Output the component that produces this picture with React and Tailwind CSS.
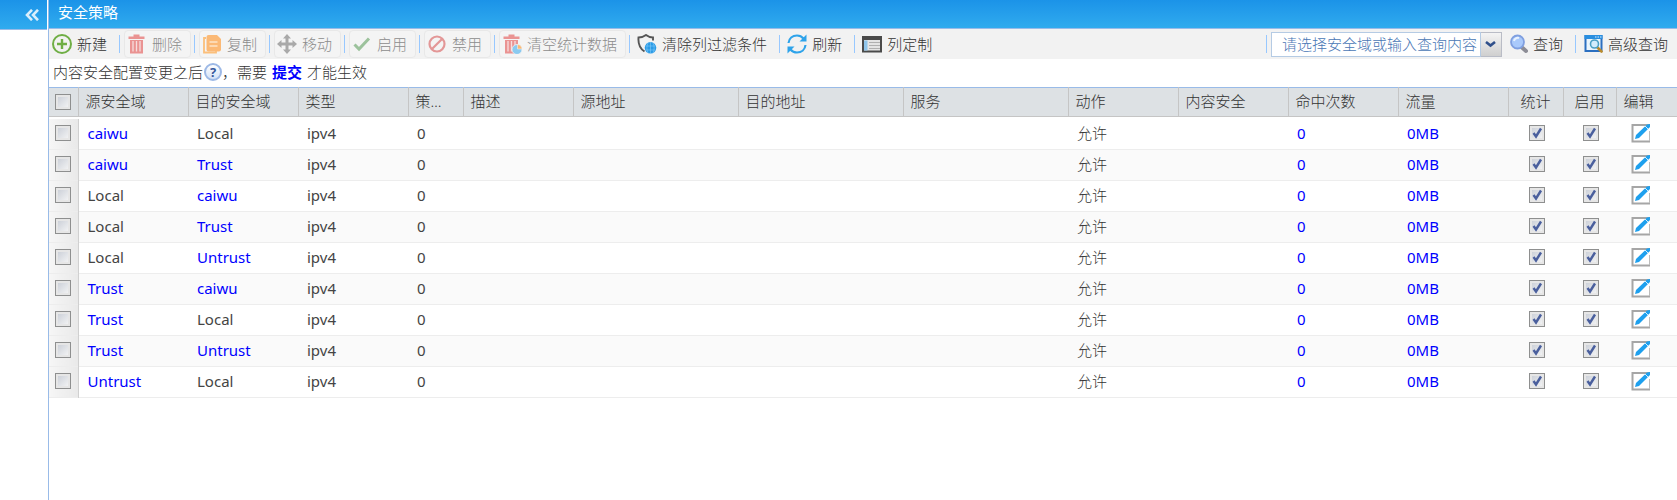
import React, { useState } from "react";

const COLUMNS = [
  { key: "src", label: "源安全域", width: "w-[110px]" },
  { key: "dst", label: "目的安全域", width: "w-[110px]" },
  { key: "type", label: "类型", width: "w-[110px]" },
  { key: "count", label: "策略数", width: "w-[55px]" },
  { key: "desc", label: "描述", width: "w-[110px]" },
  { key: "srcAddr", label: "源地址", width: "w-[165px]" },
  { key: "dstAddr", label: "目的地址", width: "w-[165px]" },
  { key: "service", label: "服务", width: "w-[165px]" },
  { key: "action", label: "动作", width: "w-[110px]" },
  { key: "content", label: "内容安全", width: "w-[110px]" },
  { key: "hits", label: "命中次数", width: "w-[110px]" },
  { key: "traffic", label: "流量", width: "w-[110px]" },
  { key: "stat", label: "统计", width: "w-[55px]", center: true },
  { key: "enabled", label: "启用", width: "w-[53px]", center: true },
  { key: "edit", label: "编辑", width: "" },
];

const POLICIES = [
  ["caiwu", "Local"],
  ["caiwu", "Trust"],
  ["Local", "caiwu"],
  ["Local", "Trust"],
  ["Local", "Untrust"],
  ["Trust", "caiwu"],
  ["Trust", "Local"],
  ["Trust", "Untrust"],
  ["Untrust", "Local"],
];

const PlusIcon = () => (
  <svg width="20" height="20" viewBox="0 0 20 20" fill="none" stroke="#6fae45">
    <circle cx="10" cy="10" r="9" strokeWidth="2" />
    <path d="M10 5v10M5 10h10" strokeWidth="2.4" />
  </svg>
);

const TrashShape = () => (
  <g fill="#ea9392">
    <path d="M1.500 2.500h16v2.500h-16zM6.500 .5h6v2h-6z" />
    <path d="M3 6h13v13.500H3z" />
    <path d="M6 7v10.500M9.500 7v10.500M13 7v10.500" stroke="#f6dddd" strokeWidth="1.300" />
  </g>
);

const TrashIcon = () => (
  <svg width="20" height="20" viewBox="0 0 20 20">
    <TrashShape />
  </svg>
);

const CopyIcon = () => (
  <svg width="20" height="20" viewBox="0 0 20 20">
    <path d="M4 4H2v14.500h12V17" fill="none" stroke="#fbbf7b" strokeWidth="1.800" />
    <path d="M6.500 1H15l4 4v10.500q0 2-2 2H6.500q-2 0-2-2V3q0-2 2-2z" fill="#fbb976" />
    <path d="M7.500 8h8M7.500 12h8" stroke="#fde3c8" strokeWidth="1.500" />
  </svg>
);

const MoveIcon = () => (
  <svg width="20" height="20" viewBox="0 0 20 20" fill="#a9a9a9">
    <path d="M10 0l4 4.500h-2.500v4h4V6L20 10l-4.500 4v-2.500h-4v4H14L10 20l-4-4.500h2.500v-4h-4V14L0 10l4.500-4v2.500h4v-4H6z" />
  </svg>
);

const CheckIcon = () => (
  <svg width="20" height="20" viewBox="0 0 20 20" fill="none" stroke="#9cc29c" strokeWidth="3">
    <path d="M2.500 10.500l4.500 4.500L17 4.500" />
  </svg>
);

const BanIcon = () => (
  <svg width="20" height="20" viewBox="0 0 20 20" fill="none" stroke="#e39797" strokeWidth="2.200">
    <circle cx="10" cy="10" r="7.500" />
    <path d="M4.700 15.300L15.300 4.700" />
  </svg>
);

const ClearStatsIcon = () => (
  <svg width="20" height="20" viewBox="0 0 20 20">
    <TrashShape />
    <circle cx="15" cy="15.500" r="5" fill="#8bcaf0" stroke="#f2f2f2" strokeWidth="0.800" />
    <path d="M15.500 15V10.500a4.500 4.500 0 0 1 4.500 4.500z" fill="#fbb976" stroke="#f2f2f2" strokeWidth="0.600" />
  </svg>
);

const ShieldIcon = () => (
  <svg width="20" height="20" viewBox="0 0 20 20" fill="none">
    <path d="M16 6.500V3.500C13 3.500 11 2.500 9 1 7 2.500 4.500 3.500 1.500 3.500 1 9.500 3 14.500 7.500 17.500" stroke="#555" strokeWidth="1.900" />
    <circle cx="13.500" cy="13.800" r="5.800" fill="#2b9be6" />
    <path d="M8.500 12h10M8.500 16h10M13.500 8v12M11 9c-1.500 3-1.500 7 0 10M16 9c1.500 3 1.500 7 0 10" stroke="#8fd0fa" strokeWidth="0.500" />
  </svg>
);

const RefreshIcon = () => (
  <svg width="20" height="20" viewBox="0 0 20 20" fill="none" stroke="#2ea3ea" strokeWidth="2.200">
    <path d="M1.500 9C2 4.500 5.500 1.500 10 1.500c2.700 0 5 1.200 6.500 3" />
    <path d="M18.500 11c-.5 4.500-4 7.500-8.500 7.500-2.700 0-5-1.200-6.500-3" />
    <path d="M19.500.5v7h-7z" fill="#2ea3ea" stroke="none" />
    <path d="M.5 19.500v-7h7z" fill="#2ea3ea" stroke="none" />
  </svg>
);

const ColumnsIcon = () => (
  <svg width="20" height="20" viewBox="0 0 20 20">
    <path d="M1 3h18v14.500H1z" fill="#e4e4e4" stroke="#4a4a4a" strokeWidth="2" />
    <path d="M0 2h20v4H0z" fill="#4a4a4a" />
    <path d="M2 6.500h3.500v10H2z" fill="#8ec4ea" />
    <path d="M7 8.500h11M7 11.500h11M7 14.500h11" stroke="#b0b0b0" />
  </svg>
);

const SearchIcon = () => (
  <svg width="20" height="20" viewBox="0 0 20 20">
    <path d="M14 13.500l4 3.500" stroke="#8d8d96" strokeWidth="4" strokeLinecap="round" />
    <circle cx="9.500" cy="8" r="6.500" fill="#a9c9fb" stroke="#7f9fe0" strokeWidth="1.800" />
    <path d="M6 7a4 4 0 0 1 5-3" fill="none" stroke="#e8f2ff" strokeWidth="2" />
  </svg>
);

const AdvancedSearchIcon = () => (
  <svg width="20" height="20" viewBox="0 0 20 20">
    <path d="M2.500 2h16v15h-16z" fill="#eaf5fd" stroke="#2b6fc0" strokeWidth="2" />
    <path d="M1.500 1h18v4h-18z" fill="#2a8fe0" />
    <path d="M12 3h1.500M14.500 3H16M17 3h1.500" stroke="#d7efff" />
    <path d="M14.500 13.500l4 4" stroke="#b98a2c" strokeWidth="2.600" strokeLinecap="round" />
    <circle cx="11.500" cy="10" r="4" fill="#d3edfb" stroke="#4ba0c4" strokeWidth="1.600" />
  </svg>
);

const HelpIcon = () => (
  <span className="ml-px inline-flex size-[18px] items-center justify-center rounded-full border-2 border-[#9db9e6] bg-linear-to-b from-white to-[#d3e1f6] text-[13px] leading-none font-bold text-[#35589c]">?</span>
);

const EditIcon = () => (
  <svg width="20" height="20" viewBox="0 0 20 20">
    <path d="M1.500 2h16.500v16.500H1.500z" fill="#fff" />
    <path d="M19 2H1.500v16.500H19" fill="none" stroke="#a6a6a6" strokeWidth="2" />
    <path d="M18.500 8v10" stroke="#bdbdbd" />
    <path d="M4 16l1-4L16 1.500 19 1v3L8 15z" fill="#1ea0ee" />
    <path d="M14 3l3 3" stroke="#d4edfc" />
  </svg>
);

const ToolButton = ({ icon: Icon, children, disabled }) => (
  <button
    type="button"
    disabled={disabled}
    className="flex h-7 shrink-0 items-center gap-[5px] rounded border border-transparent pr-2 pl-0.5 whitespace-nowrap disabled:border-[#e8e8e8] disabled:bg-[#f4f4f4] disabled:text-[#8c8c8c]"
  >
    <Icon />
    {children}
  </button>
);

const Separator = () => <span className="mr-1 ml-[3px] h-[18px] w-px shrink-0 bg-[#98c8ff]" />;

const Box = ({ label, checked, onChange }) => (
  <input
    type="checkbox"
    aria-label={label}
    checked={checked}
    onChange={onChange}
    className="block size-4 appearance-none border border-[#8e8f8f] bg-linear-to-br from-[#c6cbd4] to-[#f8f8f8] shadow-[inset_0_0_0_2px_#e6e6e6] outline-none"
  />
);

const TickBox = ({ label }) => {
  const [on, setOn] = useState(true);
  return (
    <div className="relative mx-auto size-4">
      <Box label={label} checked={on} onChange={() => setOn(!on)} />
      {on && (
        <svg className="pointer-events-none absolute inset-0" width="16" height="16" viewBox="0 0 16 16" fill="none" stroke="#4a5f9d" strokeWidth="2.400">
          <path d="M4.500 8l2.500 3.500L12 3.500" />
        </svg>
      )}
    </div>
  );
};

const Zone = ({ name }) =>
  name === "Local" ? (
    name
  ) : (
    <a href="#zone" className="text-[#0000ff]">
      {name}
    </a>
  );

const App = () => {
  const [selected, setSelected] = useState([]);

  const toggleRow = (i) => setSelected(selected.includes(i) ? selected.filter((n) => n !== i) : [...selected, i]);
  const toggleAll = () => setSelected(selected.length === POLICIES.length ? [] : POLICIES.map((_, i) => i));

  return (
    <div className="flex min-h-screen bg-white font-['Noto_Sans','Noto_Sans_CJK_SC',sans-serif] text-[15px] leading-5 font-light text-[#333]">
      {/* collapsed side menu */}
      <aside className="w-[47px] shrink-0">
        <div className="flex h-[30px] items-center justify-end border-b border-[#99bbe8] bg-linear-to-b from-[#1b93e8] to-[#30abee] pr-2">
          <button type="button" aria-label="展开菜单" className="text-[#d9eefc]">
            <svg width="14" height="12" viewBox="0 0 14 12" fill="none" stroke="currentColor" strokeWidth="2.600">
              <path d="M7 .8L2 6l5 5.200M13 .8L8 6l5 5.200" />
            </svg>
          </button>
        </div>
      </aside>

      <main className="ml-px min-w-0 flex-1 border-l border-[#99bbe8]">
        <h1 className="flex h-[29px] items-center border-b border-[#99bbe8] bg-linear-to-b from-[#1b93e8] to-[#30abee] pb-1 pl-[9px] font-normal text-white">安全策略</h1>

        {/* toolbar */}
        <div className="flex h-[30px] items-center bg-[#f2f2f2]">
          <ToolButton icon={PlusIcon}>新建</ToolButton>
          <Separator />
          <ToolButton icon={TrashIcon} disabled>删除</ToolButton>
          <Separator />
          <ToolButton icon={CopyIcon} disabled>复制</ToolButton>
          <Separator />
          <ToolButton icon={MoveIcon} disabled>移动</ToolButton>
          <Separator />
          <ToolButton icon={CheckIcon} disabled>启用</ToolButton>
          <Separator />
          <ToolButton icon={BanIcon} disabled>禁用</ToolButton>
          <Separator />
          <ToolButton icon={ClearStatsIcon} disabled>清空统计数据</ToolButton>
          <Separator />
          <ToolButton icon={ShieldIcon}>清除列过滤条件</ToolButton>
          <Separator />
          <ToolButton icon={RefreshIcon}>刷新</ToolButton>
          <Separator />
          <ToolButton icon={ColumnsIcon}>列定制</ToolButton>

          <div className="ml-auto flex items-center">
            <Separator />
            <div className="mr-[3px] flex items-center">
              <input
                type="text"
                aria-label="查询条件"
                placeholder="请选择安全域或输入查询内容"
                className="h-[25px] w-[210px] border border-[#b5cbe4] bg-white pl-2.5 outline-none placeholder:text-[#4a77b5]"
              />
              <button type="button" aria-label="选择安全域" className="flex h-[25px] w-[21px] items-center justify-center border border-l-0 border-[#b9bcc6] bg-linear-to-b from-[#f4f4f4] to-[#cfcfcf]">
                <svg width="11" height="7" viewBox="0 0 11 7" fill="none" stroke="#2f4f8a" strokeWidth="2.600">
                  <path d="M1 1l4.500 3.500L10 1" />
                </svg>
              </button>
            </div>
            <ToolButton icon={SearchIcon}>查询</ToolButton>
            <Separator />
            <ToolButton icon={AdvancedSearchIcon}>高级查询</ToolButton>
          </div>
        </div>

        <p className="flex h-7 items-center pb-0.5 pl-1">
          内容安全配置变更之后
          <HelpIcon />
          ，需要
          <a href="#commit" className="mx-[5px] font-bold text-[#0000ff]">
            提交
          </a>
          才能生效
        </p>

        <table className="w-full table-fixed border-collapse text-left">
          <colgroup>
            <col className="w-[29px]" />
            {COLUMNS.map((col) => (
              <col key={col.key} className={col.width} />
            ))}
          </colgroup>
          <thead>
            <tr className="h-[29px] border-t border-b border-t-[#99bbe8] border-b-[#c5c5c5] bg-[#dde1e4]">
              <th className="border-r border-[#c5c5c5] pl-1.5">
                <Box label="全选" checked={selected.length === POLICIES.length} onChange={toggleAll} />
              </th>
              {COLUMNS.map((col) => (
                <th key={col.key} className={`truncate border-r border-[#c5c5c5] px-[7px] pb-0.5 font-light last:border-r-0 ${col.center ? "text-center" : ""}`}>
                  {col.label}
                </th>
              ))}
            </tr>
          </thead>
          <tbody className="font-normal text-[#444] [&_td]:pb-0.5">
            <tr className="h-0.5" aria-hidden="true" />
            {POLICIES.map(([src, dst], i) => (
              <tr key={i} className="h-[31px] border-b border-[#ededed] even:bg-white odd:bg-[#fafafa]">
                <td className="border-r border-[#d0d0d0] bg-linear-to-r from-[#f6f6f6] to-[#e9e9e9] pl-1.5">
                  <Box label={`选择策略 ${i + 1}`} checked={selected.includes(i)} onChange={() => toggleRow(i)} />
                </td>
                <td className="px-[9px]"><Zone name={src} /></td>
                <td className="px-[9px]"><Zone name={dst} /></td>
                <td className="px-[9px]">ipv4</td>
                <td className="px-[9px]">0</td>
                <td />
                <td />
                <td />
                <td />
                <td className="px-[9px] font-light text-[#333]">允许</td>
                <td />
                <td className="px-[9px]"><a href="#hits" className="text-[#0000ff]">0</a></td>
                <td className="px-[9px]"><a href="#traffic" className="text-[#0000ff]">0MB</a></td>
                <td className="pl-0.5"><TickBox label="统计" /></td>
                <td className="pl-0.5"><TickBox label="启用" /></td>
                <td className="pl-[15px]">
                  <button type="button" aria-label="编辑" className="block">
                    <EditIcon />
                  </button>
                </td>
              </tr>
            ))}
          </tbody>
        </table>
      </main>
    </div>
  );
};

export default App;
